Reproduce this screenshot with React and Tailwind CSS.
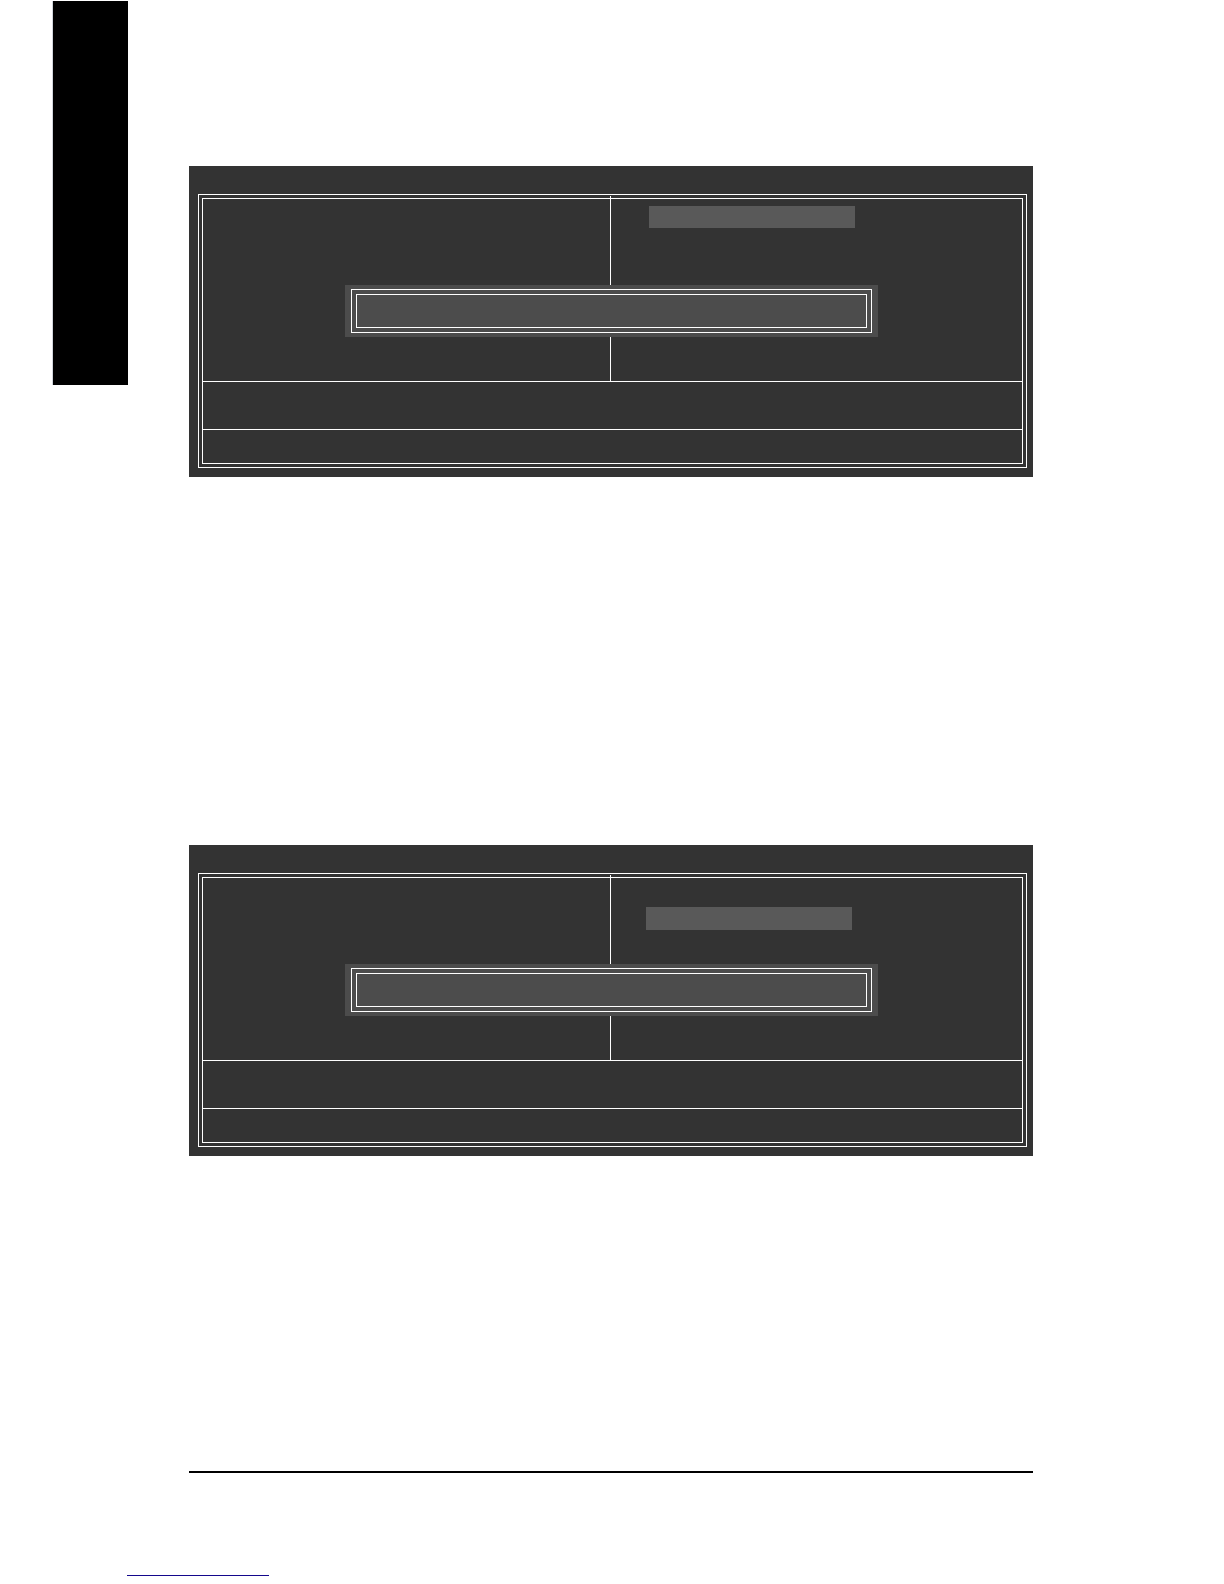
import React from 'react';

// Double-line dialog that sits over the two menu columns
function Dialog() {
  return (
    <div className="absolute top-[86px] left-[142px] right-[144px] bg-[#4c4c4c] px-[6px] py-1">
      <div className="border border-white p-1">
        <div className="h-[34px] border border-white" />
      </div>
    </div>
  );
}

function SetupScreen({ columnClass, itemClass }) {
  return (
    <section className="bg-[#333333] pt-7 pr-[6px] pb-[9px] pl-[9px]">
      <div className="border border-white p-[3px]">
        <div className="border border-white">
          {/* Menu columns */}
          <div className="relative flex h-[182px]">
            <div className="-mt-[3px] w-[408px] shrink-0 border-r border-white" />
            <div className={`flex-1 ${columnClass}`}>
              <div className={`w-[206px] bg-[#595959] ${itemClass}`} />
            </div>
            <Dialog />
          </div>

          {/* Key help */}
          <div className="h-12 border-t border-white" />

          {/* Item description */}
          <div className="h-[34px] border-t border-white" />
        </div>
      </div>
    </section>
  );
}

export default function App() {
  return (
    <div className="min-h-screen bg-white">
      <div className="flex items-start pl-[52px] pr-[191px]">
        {/* Side tab */}
        <aside className="mt-px h-[384px] w-[76px] shrink-0 border-l border-gray-300 bg-black" />

        <main className="ml-[61px] min-w-0 flex-1 pt-[166px]">
          <div className="flex flex-col gap-[368px]">
            <SetupScreen columnClass="pt-[7px] pl-[38px]" itemClass="h-[22px]" />
            <SetupScreen columnClass="pt-[29px] pl-[35px]" itemClass="h-[23px]" />
          </div>
          <hr className="mt-[315px] border-t-2 border-black" />
        </main>
      </div>

      <footer className="pt-[102px] pl-[127px]">
        <div className="h-px w-[142px] bg-[#14088c]" />
      </footer>
    </div>
  );
}
